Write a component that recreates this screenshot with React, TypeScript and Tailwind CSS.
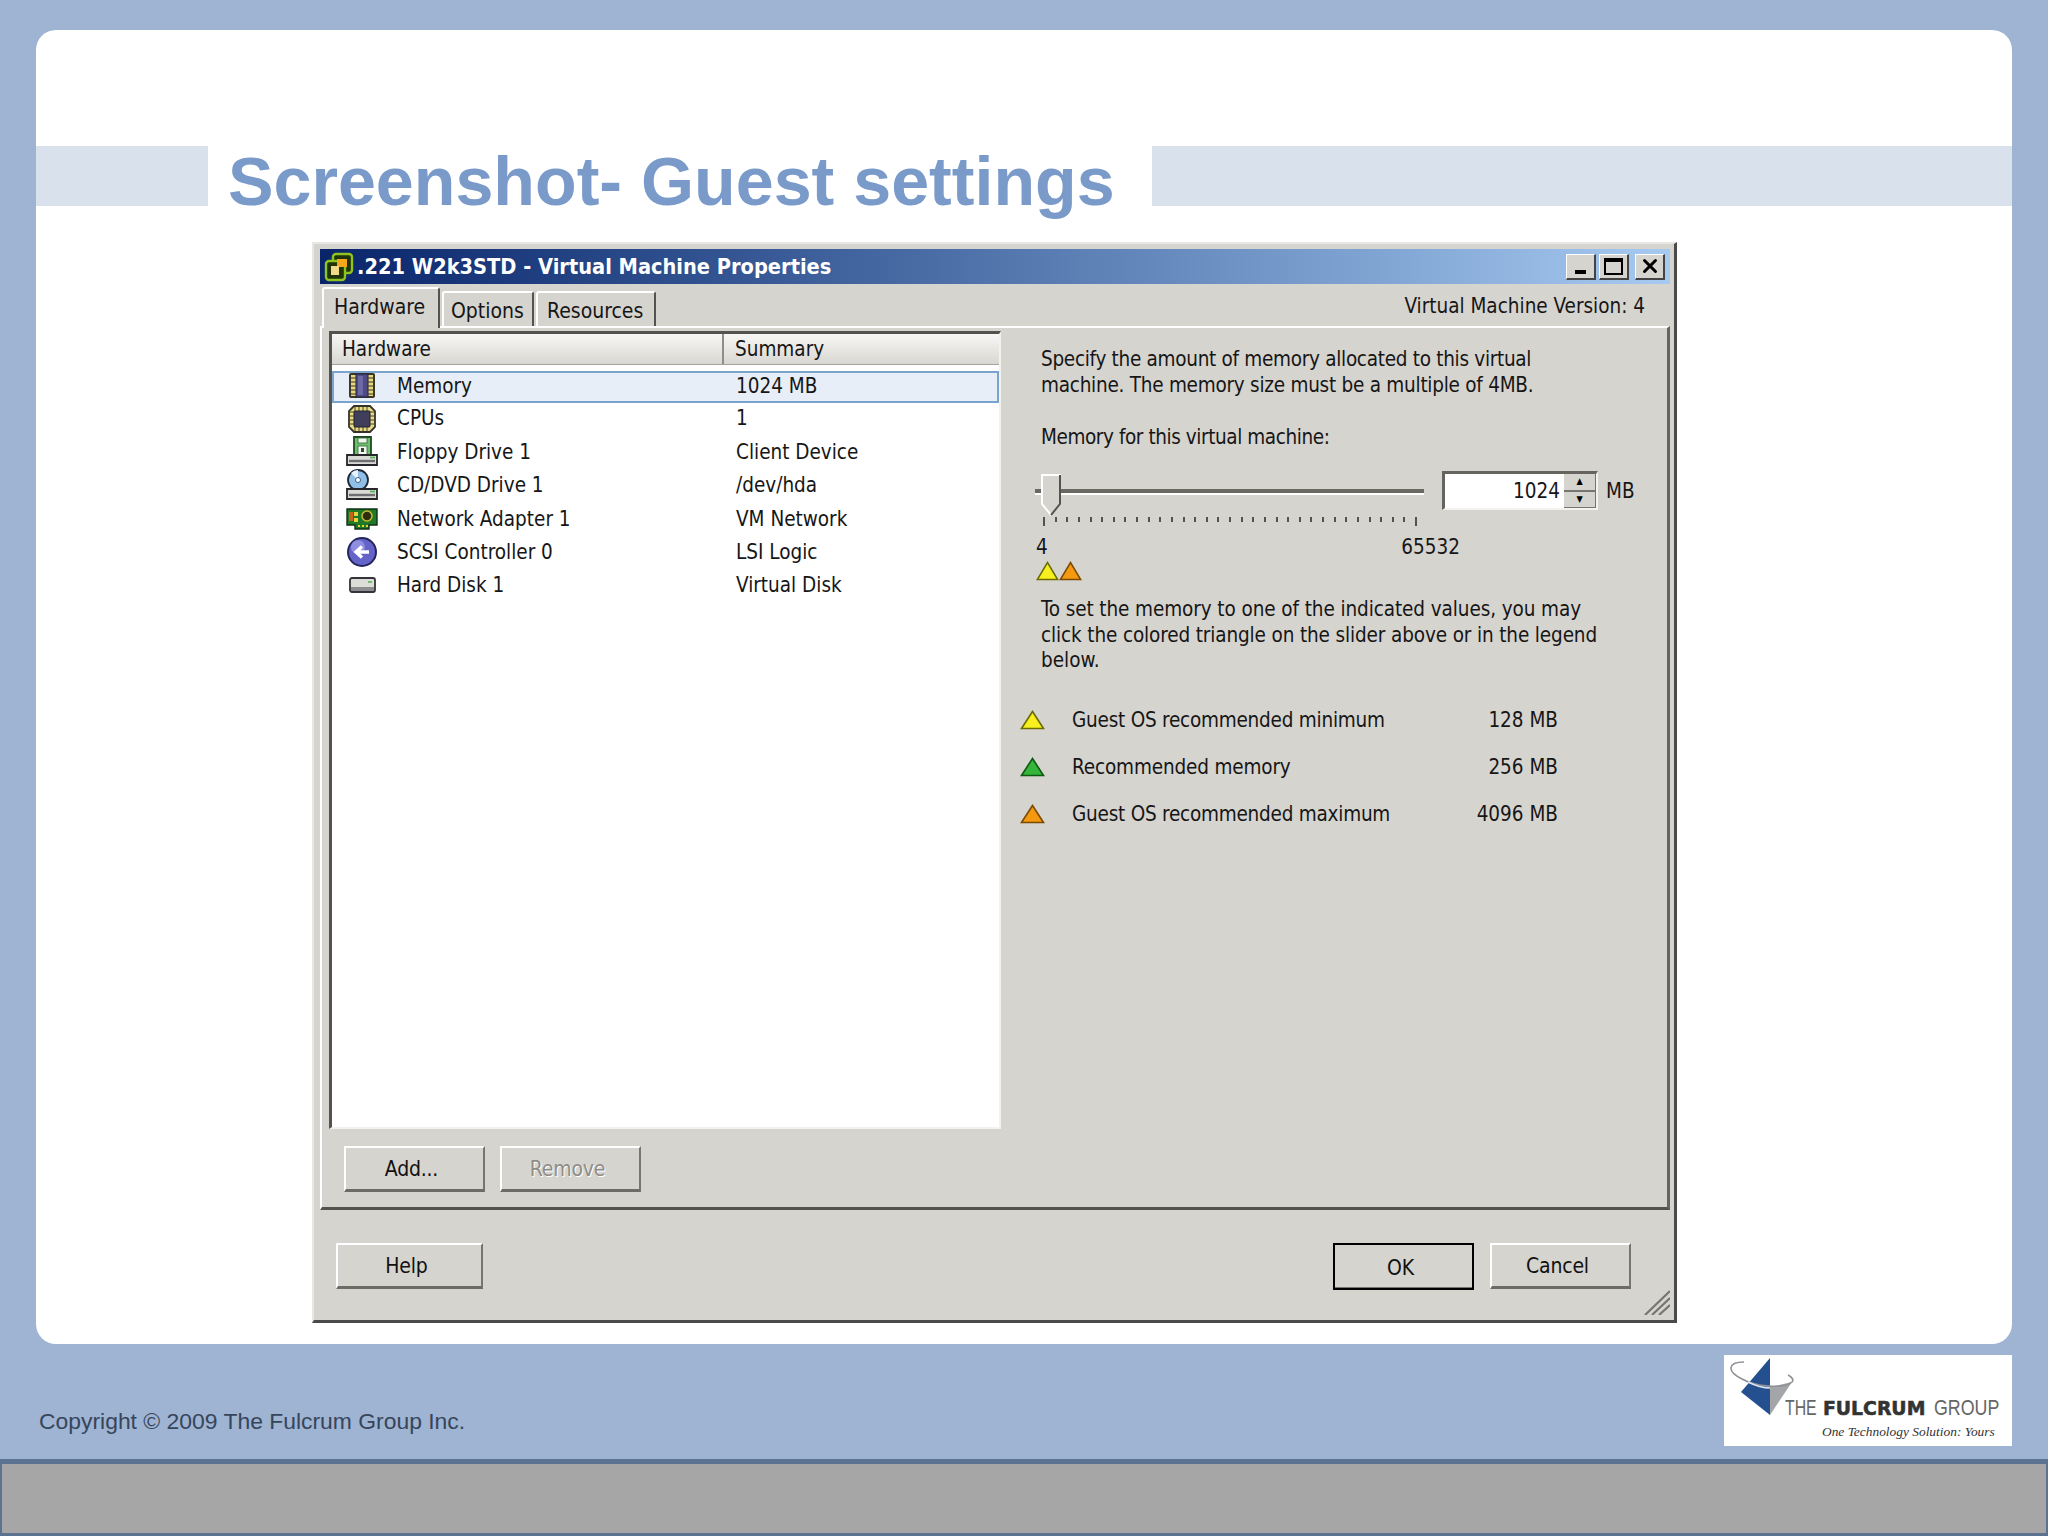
import { X } from 'lucide-react'

const ui = "font-['DejaVu_Sans',sans-serif] [font-stretch:condensed]"

const rows = [
  ['memory', 'Memory', '1024 MB'],
  ['cpu', 'CPUs', '1'],
  ['floppy', 'Floppy Drive 1', 'Client Device'],
  ['cd', 'CD/DVD Drive 1', '/dev/hda'],
  ['nic', 'Network Adapter 1', 'VM Network'],
  ['scsi', 'SCSI Controller 0', 'LSI Logic'],
  ['hdd', 'Hard Disk 1', 'Virtual Disk'],
]

const legend = [
  ['#f7f01e', '#6b6b00', 'Guest OS recommended minimum', '128 MB', 'tracking-[-0.23px]'],
  ['#35b53a', '#0d5a12', 'Recommended memory', '256 MB', 'tracking-[-0.15px]'],
  ['#f59a10', '#7a4a00', 'Guest OS recommended maximum', '4096 MB', 'tracking-[-0.23px]'],
]

function Drive({ y = 18 }: { y?: number }) {
  return (
    <g>
      <path d={`M1 ${y + 1} h30 v10 h-30 z`} fill="#d9d9d6" stroke="#26262c" strokeWidth="1.8" />
      <path d={`M3 ${y + 7} h26`} stroke="#6d6d72" strokeWidth="2.4" />
      <path d={`M24 ${y + 3.5} h5`} stroke="#4fb34f" strokeWidth="1.6" />
    </g>
  )
}

function RowIcon({ name }: { name: string }) {
  if (name === 'memory') {
    return (
      <svg width="32" height="32" viewBox="0 0 32 32">
        <rect x="3" y="3" width="26" height="25" rx="2" fill="#3a3828" />
        <rect x="5" y="5" width="5" height="21" fill="#e6d67e" />
        <rect x="22" y="5" width="5" height="21" fill="#e6d67e" />
        {[8, 12, 16, 20, 24].map(y => (
          <g key={y}>
            <path d={`M5 ${y} h5`} stroke="#5a5230" strokeWidth="1.2" />
            <path d={`M22 ${y} h5`} stroke="#5a5230" strokeWidth="1.2" />
          </g>
        ))}
        <rect x="10" y="4" width="12" height="23" fill="#4d4a86" stroke="#24233f" />
        <rect x="12" y="6" width="5" height="19" fill="#6c69a6" />
      </svg>
    )
  }
  if (name === 'cpu') {
    return (
      <svg width="32" height="32" viewBox="0 0 32 32">
        <path d="M8 3 h16 l5 5 v16 l-5 5 h-16 l-5 -5 v-16 z" fill="#e5d98a" stroke="#33332a" strokeWidth="1.8" />
        {[9, 13, 17, 21].map(p => (
          <g key={p} stroke="#6b5f24" strokeWidth="1.2">
            <path d={`M${p} 4 v4`} />
            <path d={`M${p} 24 v4`} />
            <path d={`M4 ${p} h4`} />
            <path d={`M24 ${p} h4`} />
          </g>
        ))}
        <rect x="8" y="8" width="16" height="16" rx="1" fill="#3f3f5c" stroke="#22222e" />
      </svg>
    )
  }
  if (name === 'floppy') {
    return (
      <svg width="32" height="32" viewBox="0 0 32 32">
        <path d="M8 1 h17 v19 h-17 z" fill="#6fbf6c" stroke="#1e4a24" strokeWidth="1.8" />
        <rect x="12" y="2" width="9" height="5" fill="#eef5ec" stroke="#2d6a35" strokeWidth=".8" />
        <rect x="12" y="10" width="9" height="9" fill="#f3f8f1" stroke="#2d6a35" strokeWidth=".8" />
        <rect x="15" y="12" width="3" height="4" fill="#2d4a2d" />
        <Drive />
      </svg>
    )
  }
  if (name === 'cd') {
    return (
      <svg width="32" height="32" viewBox="0 0 32 32">
        <circle cx="12" cy="11" r="10" fill="#8fbfe6" stroke="#1f2836" strokeWidth="1.8" />
        <path d="M12 11 L5 4 A10 10 0 0 1 12 1 z" fill="#e8f3fb" />
        <circle cx="12" cy="11" r="2.5" fill="#fff" stroke="#3f5f8a" />
        <Drive y={19} />
      </svg>
    )
  }
  if (name === 'nic') {
    return (
      <svg width="32" height="32" viewBox="0 0 32 32">
        <path d="M1 6 h30 v16 h-8 v4 h-14 v-4 h-8 z" fill="#1f7a28" stroke="#123015" strokeWidth="1.4" />
        <rect x="3" y="9" width="4" height="9" fill="#c2641a" />
        <rect x="8" y="9" width="4" height="4" fill="#e6d23a" />
        <rect x="8" y="15" width="4" height="4" fill="#e6d23a" />
        <circle cx="21" cy="13" r="5" fill="#2d2d10" stroke="#c9b92e" strokeWidth="1.5" />
        <path d="M12 23 h2 M16 23 h2 M20 23 h2" stroke="#e6d23a" strokeWidth="2" />
      </svg>
    )
  }
  if (name === 'scsi') {
    return (
      <svg width="32" height="32" viewBox="0 0 32 32">
        <circle cx="16" cy="16" r="14" fill="#6464c8" stroke="#24245e" strokeWidth="2" />
        <circle cx="12" cy="11" r="7" fill="#8f8fe2" />
        <path d="M23 16 h-11 M16 10.5 l-6 5.5 l6 5.5" fill="none" stroke="#fff" strokeWidth="3.4" />
      </svg>
    )
  }
  return (
    <svg width="32" height="32" viewBox="0 0 32 32">
      <rect x="4" y="8" width="25" height="14" rx="2" fill="#dcdcd8" stroke="#33333a" strokeWidth="1.8" />
      <path d="M5 17 h23 v4 h-23 z" fill="#8d8d90" />
      <path d="M22 12 h4" stroke="#4fb34f" strokeWidth="1.5" />
    </svg>
  )
}

function Tri({ fill, stroke, size = 25 }: { fill: string; stroke: string; size?: number }) {
  return (
    <svg width={size} height="20" viewBox="0 0 25 20" preserveAspectRatio="none" className="block">
      <path d="M12.5 1.5 L23.5 18.5 H1.5 z" fill={fill} stroke={stroke} strokeWidth="1.6" />
    </svg>
  )
}

function Btn({ label, w, disabled, main }: { label: string; w: string; disabled?: boolean; main?: boolean }) {
  return (
    <div
      className={`${w} flex items-center justify-center pr-[6px] pt-[2px] text-[21px] tracking-[-0.2px] border-t-2 border-l-2 border-r-2 border-t-white border-l-white border-r-[#77756f] ${
        main
          ? 'h-[47px] outline-2 -outline-offset-2 outline-black shadow-[inset_0_-3px_0_#77756f]'
          : 'h-[46px] border-b-[3px] border-b-[#6d6b66]'
      } ${disabled ? 'text-[#8f8d88] [text-shadow:1px_1px_0_#fff]' : 'text-[#111]'}`}
    >
      {label}
    </div>
  )
}

function WinBtn({ children }: { children: React.ReactNode }) {
  return (
    <div className="w-[30px] h-[26px] bg-[#d6d4cf] border-t border-l border-white border-r-2 border-b-2 border-r-[#444] border-b-[#444] flex items-center justify-center">
      {children}
    </div>
  )
}

export default function App() {
  return (
    <div className="w-[2048px] h-[1536px] bg-[#9fb3d3] flex flex-col overflow-hidden">
      <div className="h-[1459px] px-[36px] pt-[30px] flex flex-col">
        {/* Slide card */}
        <div className="h-[1314px] bg-white rounded-[20px] pt-[116px] flex flex-col">
          <div className="h-[60px] flex">
            <div className="w-[172px] bg-[#d9e1ec]" />
            <h1 className="w-[944px] pl-[20px] pt-[5px] leading-[60px] whitespace-nowrap font-['Liberation_Sans',sans-serif] font-bold text-[68.2px] text-[#7a9aca]">
              Screenshot- Guest settings
            </h1>
            <div className="flex-1 bg-[#d9e1ec]" />
          </div>

          {/* Dialog */}
          <div
            className={`${ui} ml-[276px] mt-[36px] w-[1365px] h-[1081px] bg-[#d6d4cf] text-[#161616] border-t-2 border-l-2 border-t-[#e9e7e3] border-l-[#e9e7e3] border-r-[3px] border-b-[3px] border-r-[#4a4a4a] border-b-[#4a4a4a] pl-[6px] pr-[4px] pt-[5px] flex flex-col`}
          >
            <div className="h-[35px] bg-gradient-to-r from-[#0a246a] to-[#a6caf0] flex items-center pl-[4px] pr-[5px] shrink-0">
              <svg width="30" height="30" viewBox="0 0 30 30">
                <rect x="9" y="2" width="19" height="19" rx="3" fill="#20340c" stroke="#8fc31f" strokeWidth="2.4" />
                <rect x="2" y="9" width="19" height="19" rx="3" fill="#20340c" stroke="#8fc31f" strokeWidth="2.4" />
                <rect x="13" y="7" width="10" height="8" fill="#f5a81c" />
                <rect x="7" y="14" width="8" height="9" fill="#f5d98a" />
              </svg>
              <span className="ml-[3px] text-white font-bold text-[21.6px] leading-none whitespace-nowrap">.221 W2k3STD - Virtual Machine Properties</span>
              <div className="ml-auto flex items-center gap-[3px]">
                <WinBtn><span className="w-[11px] h-[4px] bg-black mt-[12px]" /></WinBtn>
                <WinBtn><span className="w-[19px] h-[17px] border-2 border-t-[4px] border-black" /></WinBtn>
                <div className="ml-[3px]">
                  <WinBtn><X size={22} strokeWidth={3.2} className="text-black" /></WinBtn>
                </div>
              </div>
            </div>

            {/* Tabs */}
            <div className="h-[42px] shrink-0 flex items-end relative z-10 text-[21px]">
              <div className="ml-[2px] w-[118px] h-[41px] -mb-[2px] bg-[#d6d4cf] border-t-2 border-l-2 border-t-white border-l-white border-r-2 border-r-[#55534f] rounded-t-[3px] pl-[10px] leading-[36px]">Hardware</div>
              <div className="ml-[2px] w-[92px] h-[35px] border-t-2 border-l-2 border-t-white border-l-white border-r-2 border-r-[#55534f] rounded-t-[3px] pl-[7px] leading-[36px]">Options</div>
              <div className="ml-[2px] w-[120px] h-[35px] border-t-2 border-l-2 border-t-white border-l-white border-r-2 border-r-[#55534f] rounded-t-[3px] pl-[9px] leading-[36px]">Resources</div>
              <div className="ml-auto mr-[25px] self-start mt-[9px] leading-[26px] text-[20.5px]">Virtual Machine Version: 4</div>
            </div>

            {/* Tab panel */}
            <div className="h-[884px] shrink-0 border-t-2 border-l-2 border-t-white border-l-white border-r-[3px] border-b-[3px] border-r-[#66645f] border-b-[#55534f] flex">
              <div className="w-[680px] pl-[7px] pt-[3px] shrink-0 text-[20.5px]">
                <div className="w-[672px] h-[798px] bg-white border-t-[3px] border-l-[3px] border-t-[#55534f] border-l-[#55534f] border-r-2 border-b-2 border-r-[#f3f2ef] border-b-[#f3f2ef]">
                  <div className="h-[31px] flex bg-gradient-to-b from-[#f8f7f5] to-[#d9d7d2] border-b border-b-[#a5a39e]">
                    <div className="w-[392px] pl-[10px] leading-[30px] border-r-2 border-r-[#8f8d88]">Hardware</div>
                    <div className="pl-[11px] leading-[30px]">Summary</div>
                  </div>
                  <div className="pt-[6px]">
                    {rows.map(([icon, name, value], i) => (
                      <div
                        key={name}
                        className={`flex items-center ${
                          i === 0
                            ? 'h-[32px] bg-[#e7eef7] border-2 border-[#7ba4cc] mb-[-1px] pb-[2px]'
                            : 'h-[33.4px] border-2 border-transparent'
                        }`}
                      >
                        <div className="w-[12px]" />
                        <RowIcon name={icon} />
                        <div className="w-[358px] pl-[19px] whitespace-nowrap">{name}</div>
                        <div className="whitespace-nowrap">{value}</div>
                      </div>
                    ))}
                  </div>
                </div>
                <div className="mt-[17px] ml-[15px] flex gap-[15px]">
                  <Btn label="Add..." w="w-[141px]" />
                  <Btn label="Remove" w="w-[141px]" disabled />
                </div>
              </div>

              <div className="flex-1 pl-[39px] pt-[18px] text-[20.5px] leading-[26px]">
                <p className="tracking-[-0.29px]">Specify the amount of memory allocated to this virtual</p>
                <p className="tracking-[-0.25px]">machine. The memory size must be a multiple of 4MB.</p>
                <p className="mt-[26px] tracking-[-0.42px]">Memory for this virtual machine:</p>

                <div className="mt-[21px] -ml-[6px] h-[39px] flex items-center">
                  <div className="relative w-[389px] h-[39px] pt-[3px] flex items-center">
                    <div className="w-full h-[6px] bg-[#6a6863] border-b-2 border-b-white" />
                    <svg width="22" height="42" viewBox="0 0 22 42" className="absolute left-[5px] top-[3px]">
                      <path d="M2 1 H20 V30 L11 41 L2 30 z" fill="#d6d4cf" stroke="#fff" strokeWidth="2" />
                      <path d="M20 1 V30 L11 41" fill="none" stroke="#55534f" strokeWidth="2" />
                    </svg>
                  </div>
                  <div className="ml-[18px] w-[156px] h-[39px] bg-white border-t-[3px] border-l-[3px] border-t-[#66645f] border-l-[#66645f] border-r-2 border-b-2 border-r-[#f3f2ef] border-b-[#f3f2ef] flex items-center justify-end">
                    <span className="mr-[4px]">1024</span>
                    <div className="w-[32px] h-full flex flex-col bg-[#d6d4cf] text-[9px] leading-none text-black">
                      <div className="flex-1 flex items-center justify-center border-b-2 border-b-[#77756f] border-r border-r-[#77756f]">▲</div>
                      <div className="flex-1 flex items-center justify-center border-b border-b-[#77756f] border-r border-r-[#77756f]">▼</div>
                    </div>
                  </div>
                  <span className="ml-[8px]">MB</span>
                </div>

                <div className="mt-[7px] w-[374px] ml-[2px] h-[9px] flex justify-between items-start">
                  {Array.from({ length: 33 }).map((_, i) => (
                    <span key={i} className={`w-[2px] bg-[#55534f] ${i === 0 || i === 32 ? 'h-[9px]' : 'h-[5px]'}`} />
                  ))}
                </div>

                <div className="mt-[8px] -ml-[5px] w-[424px] flex justify-between">
                  <span>4</span>
                  <span>65532</span>
                </div>
                <div className="mt-[1px] -ml-[5px] flex">
                  <Tri fill="#f7f01e" stroke="#6b6b00" size={23} />
                  <Tri fill="#f59a10" stroke="#7a4a00" size={23} />
                </div>

                <div className="mt-[16px] leading-[25.5px]">
                  <p className="tracking-[-0.09px]">To set the memory to one of the indicated values, you may</p>
                  <p className="tracking-[-0.13px]">click the colored triangle on the slider above or in the legend</p>
                  <p>below.</p>
                </div>

                <div className="mt-[33px] -ml-[21px] flex flex-col gap-[21px]">
                  {legend.map(([fill, stroke, label, value, track]) => (
                    <div key={label} className="w-[538px] flex items-center">
                      <Tri fill={fill} stroke={stroke} />
                      <span className={`ml-[27px] whitespace-nowrap ${track}`}>{label}</span>
                      <span className="ml-auto">{value}</span>
                    </div>
                  ))}
                </div>
              </div>
            </div>

            {/* Dialog buttons */}
            <div className="relative flex-1 pl-[16px] pr-[39px] pt-[33px] flex items-start">
              <Btn label="Help" w="w-[147px]" />
              <div className="ml-auto flex gap-[16px]">
                <Btn label="OK" w="w-[141px]" main />
                <Btn label="Cancel" w="w-[141px]" />
              </div>
              <svg width="27" height="26" viewBox="0 0 27 26" className="absolute right-0 bottom-[5px]">
                <path d="M27 2 L2 26 M27 9 L9 26 M27 16 L16 26" stroke="#77756f" strokeWidth="2.2" />
              </svg>
            </div>
          </div>
        </div>

        {/* Footer */}
        <div className="pt-[11px] flex justify-between items-start">
          <p className="mt-[52px] ml-[3px] font-['Liberation_Sans',sans-serif] text-[22.9px] leading-[28px] text-[#36465a]">
            Copyright © 2009 The Fulcrum Group Inc.
          </p>
          <div className="relative w-[288px] h-[91px] bg-white pl-[61px] pt-[41px]">
            <svg width="80" height="64" viewBox="0 0 80 64" className="absolute left-0 top-0">
              <path d="M46 32 L68 27 L46 60 z" fill="#a4a5a8" />
              <path d="M46 3 L17 37 L46 60 z" fill="#24508f" />
              <path d="M20 7 C4 7 2 16 18 24 C32 32 60 34 68 27 C70 25 68 22 64 20" fill="none" stroke="#8d9196" strokeWidth="1.6" />
              <path d="M24 27 C32 31 40 33 46 33" fill="none" stroke="#dbe6f2" strokeWidth="1.6" />
            </svg>
            <div className="flex items-baseline leading-[24px] text-[22px] font-['Liberation_Sans',sans-serif] whitespace-nowrap">
              <span className="inline-block w-[30px] origin-left scale-x-[.72] text-[#666]">THE</span>
              <span className="inline-block ml-[8px] w-[103px] origin-left scale-x-[.94] font-['DejaVu_Sans',sans-serif] font-bold text-[#333] text-[20px] [-webkit-text-stroke:0.6px_#333]">FULCRUM</span>
              <span className="inline-block ml-[8px] w-[65px] origin-left scale-x-[.81] text-[#666]">GROUP</span>
            </div>
            <p className="mt-[3px] ml-[37px] font-['Liberation_Serif',serif] italic text-[#333] text-[13.4px] leading-[18px] whitespace-nowrap">
              One Technology Solution: Yours
            </p>
          </div>
        </div>
      </div>

      {/* Bottom bar */}
      <div className="h-[77px] bg-[#a6a6a6] border-t-[5px] border-l-2 border-b-[3px] border-r-2 border-[#5c7291]" />
    </div>
  )
}
